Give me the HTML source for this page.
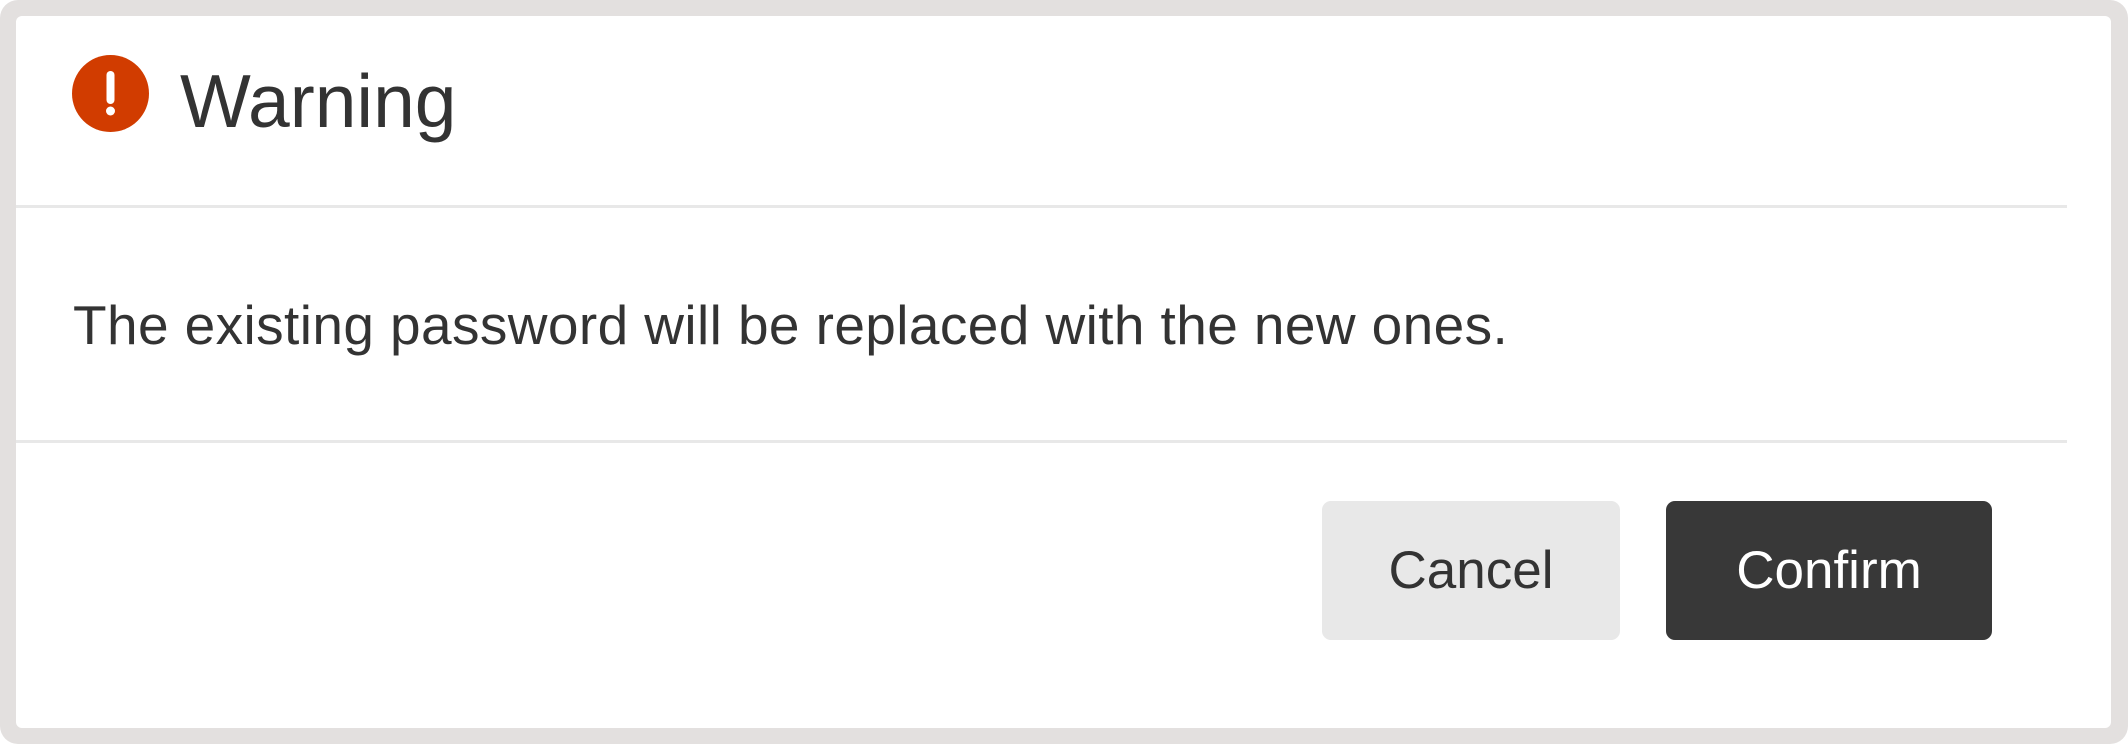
<!DOCTYPE html>
<html><head><meta charset="utf-8"><style>
html,body{margin:0;padding:0;background:#fff;}
body{width:2128px;height:744px;position:relative;overflow:hidden;font-family:"Liberation Sans",sans-serif;color:#333;}
.frame{position:absolute;left:0;top:0;width:2128px;height:744px;background:#e3e0df;border-radius:18px;}
.panel{position:absolute;left:16px;top:16px;width:2095px;height:712px;background:#fff;border-radius:6px;}
.line{position:absolute;left:16px;width:2051px;height:3px;background:#e8e8e8;}
.icon{position:absolute;left:72px;top:55px;width:77px;height:77px;border-radius:50%;background:#d13c00;}
.title{position:absolute;left:180px;top:59px;font-size:75px;line-height:85px;white-space:nowrap;}
.body{position:absolute;left:73px;top:293px;font-size:55px;line-height:64px;white-space:nowrap;letter-spacing:0.4px;}
.btn{position:absolute;top:501px;height:139px;border-radius:9px;font-size:53px;line-height:139px;text-align:center;}
</style></head><body>
<div class="frame"></div>
<div class="panel"></div>
<div class="icon"><svg width="77" height="77" viewBox="0 0 77 77"><path d="M38.5 20 L38.5 45" stroke="#fff" stroke-width="8" stroke-linecap="round"/><circle cx="38.5" cy="56" r="4.5" fill="#fff"/></svg></div>
<div class="title">Warning</div>
<div class="line" style="top:205px"></div>
<div class="body">The existing password will be replaced with the new ones.</div>
<div class="line" style="top:440px"></div>
<div class="btn" style="left:1322px;width:298px;background:#e8e8e8;color:#333;">Cancel</div>
<div class="btn" style="left:1666px;width:326px;background:#383838;color:#fff;">Confirm</div>
</body></html>
